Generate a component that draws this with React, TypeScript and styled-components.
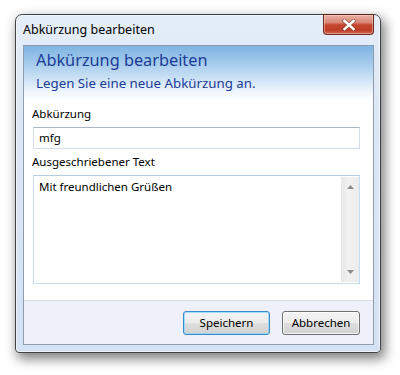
import React from "react";
import styled, { createGlobalStyle } from "styled-components";

const Global = createGlobalStyle`
  * { box-sizing: border-box; }
  html, body { margin: 0; padding: 0; background: #ffffff; }
  body { font-family: "Noto Sans", "Open Sans", sans-serif; }
`;

const Page = styled.div`
  width: 400px;
  height: 375px;
  padding: 14px 0 0 15px;
  background: #ffffff;
`;

const Window = styled.div`
  width: 366px;
  height: 339px;
  border: 1px solid #3f4449;
  border-radius: 7px 7px 4px 4px;
  background: linear-gradient(to bottom, #e4edf8 0%, #dae6f5 40%, #d4e2f3 100%);
  box-shadow: 3px 5px 12px 1px rgba(0, 0, 0, 0.5), inset 0 0 0 1px rgba(255, 255, 255, 0.6);
  display: flex;
  flex-direction: column;
`;

const TitleBar = styled.div`
  height: 30px;
  display: flex;
  align-items: flex-start;
  justify-content: space-between;
  padding: 0 6px 0 7px;
`;

const Title = styled.div`
  font-size: 12.5px;
  line-height: 16px;
  color: #000000;
  padding-top: 7px;
`;

const CloseButton = styled.div`
  width: 51px;
  height: 21px;
  margin-top: -1px;
  border: 1px solid #6e2a20;
  border-top-color: #5a241c;
  border-radius: 0 0 4px 4px;
  background: linear-gradient(
    to bottom,
    #e8b1a5 0%,
    #d98574 40%,
    #c4452f 52%,
    #bf3e28 80%,
    #cf6a52 100%
  );
  box-shadow: inset 0 0 0 1px rgba(255, 220, 210, 0.45);
  display: flex;
  align-items: center;
  justify-content: center;
`;

const Client = styled.div`
  margin: 0 6px 0 7px;
  height: 300px;
  border: 1px solid #8e9cae;
  background: #ffffff;
  display: flex;
  flex-direction: column;
`;

const Header = styled.div`
  height: 55px;
  padding: 3px 0 0 12px;
  background: linear-gradient(
    to bottom,
    #7fb4e2 0%,
    #9cc6eb 25%,
    #c6def4 55%,
    #eef5fc 82%,
    #ffffff 100%
  );
`;

const HeaderTitle = styled.div`
  font-size: 16.3px;
  line-height: 22px;
  color: #1b3c94;
`;

const HeaderSub = styled.div`
  font-size: 13.3px;
  line-height: 18px;
  margin-top: 3px;
  color: #213c98;
`;

const Form = styled.div`
  height: 199px;
  padding: 5px 13px 0 8px;
  display: flex;
  flex-direction: column;
`;

const Label = styled.div<{ $gap?: number }>`
  font-size: 11.5px;
  line-height: 15px;
  color: #000000;
  margin-top: ${(p) => p.$gap ?? 0}px;
`;

const TextBox = styled.div`
  margin: 6px 0 0 1px;
  height: 22px;
  border: 1px solid #d5dde8;
  border-top-color: #abb6c4;
  background: #ffffff;
  font-size: 11.5px;
  line-height: 19px;
  padding: 0 0 0 5px;
  color: #000000;
`;

const TextArea = styled.div`
  margin: 6px 0 0 1px;
  height: 109px;
  border: 1px solid #c7dcef;
  border-top-color: #b3cde6;
  background: #ffffff;
  display: flex;
`;

const AreaText = styled.div`
  flex: 1;
  font-size: 11.5px;
  line-height: 15px;
  padding: 3px 0 0 5px;
  color: #000000;
`;

const Scrollbar = styled.div`
  width: 18px;
  margin: 1px 0 1px 0;
  background: linear-gradient(to right, #e6e6e6, #f1f1f1 40%, #ececec);
  display: flex;
  flex-direction: column;
  justify-content: space-between;
  align-items: center;
  padding: 8px 0 8px 0;
`;

const Footer = styled.div`
  flex: 1;
  border-top: 1px solid #d6dde9;
  background: #eef1fa;
  display: flex;
  justify-content: flex-end;
  align-items: flex-start;
  gap: 12px;
  padding: 10px 13px 0 0;
`;

const Button = styled.div<{ $primary?: boolean; $w: number }>`
  width: ${(p) => p.$w}px;
  height: 24px;
  border: 1px solid ${(p) => (p.$primary ? "#3c8bc9" : "#707070")};
  border-radius: 3px;
  background: linear-gradient(
    to bottom,
    #f3f3f3 0%,
    #ececec 48%,
    #dedede 52%,
    #d2d2d2 100%
  );
  box-shadow: inset 0 0 0 1px
    ${(p) => (p.$primary ? "rgba(140, 215, 250, 0.8)" : "rgba(255, 255, 255, 0.75)")};
  font-size: 11.5px;
  line-height: 22px;
  text-align: center;
  color: #000000;
`;

const Arrow = ({ up }: { up?: boolean }) => (
  <svg width="7" height="4" viewBox="0 0 7 4">
    <path d={up ? "M0 4 L3.5 0 L7 4 Z" : "M0 0 L7 0 L3.5 4 Z"} fill="#8c8c8c" />
  </svg>
);

const CloseGlyph = () => (
  <svg width="14" height="12" viewBox="0 0 14 12">
    <path
      d="M2.5 2 L11.5 10 M11.5 2 L2.5 10"
      stroke="#6b3a33"
      strokeWidth="4"
      strokeLinecap="square"
      opacity="0.55"
    />
    <path
      d="M2.5 2 L11.5 10 M11.5 2 L2.5 10"
      stroke="#ffffff"
      strokeWidth="2.4"
      strokeLinecap="square"
    />
  </svg>
);

export default function App() {
  return (
    <>
      <Global />
      <Page>
        <Window>
          <TitleBar>
            <Title>Abkürzung bearbeiten</Title>
            <CloseButton>
              <CloseGlyph />
            </CloseButton>
          </TitleBar>
          <Client>
            <Header>
              <HeaderTitle>Abkürzung bearbeiten</HeaderTitle>
              <HeaderSub>Legen Sie eine neue Abkürzung an.</HeaderSub>
            </Header>
            <Form>
              <Label>Abkürzung</Label>
              <TextBox>mfg</TextBox>
              <Label $gap={5}>Ausgeschriebener Text</Label>
              <TextArea>
                <AreaText>Mit freundlichen Grüßen</AreaText>
                <Scrollbar>
                  <Arrow up />
                  <Arrow />
                </Scrollbar>
              </TextArea>
            </Form>
            <Footer>
              <Button $primary $w={87}>Speichern</Button>
              <Button $w={78}>Abbrechen</Button>
            </Footer>
          </Client>
        </Window>
      </Page>
    </>
  );
}
